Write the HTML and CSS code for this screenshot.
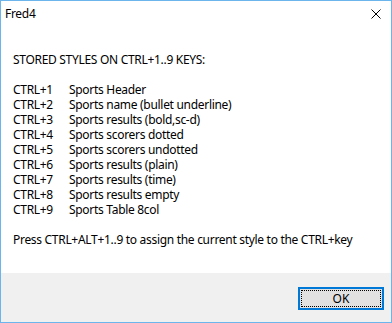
FILE: index.html
```html
<!DOCTYPE html>
<html lang="en">
<head>
    <meta charset="UTF-8">
    <title>Fred4</title>
    <link rel="stylesheet" href="styles.css">
</head>
<body>

    <div class="window">
        <div class="titlebar">
            <span class="title">Fred4</span>
            <span class="close">
                <svg width="10" height="10" viewBox="0 0 10 10">
                    <path d="M0.5 0.5 L9.5 9.5 M9.5 0.5 L0.5 9.5" stroke="#000" stroke-width="1" fill="none"/>
                </svg>
            </span>
        </div>

        <div class="content">
            <p class="line">STORED STYLES ON CTRL+1..9 KEYS:</p>
            <p class="line">&nbsp;</p>
            <div class="keys">
                <span>CTRL+1</span><span>Sports Header</span>
                <span>CTRL+2</span><span>Sports name (bullet underline)</span>
                <span>CTRL+3</span><span>Sports results (bold,sc-d)</span>
                <span>CTRL+4</span><span>Sports scorers dotted</span>
                <span>CTRL+5</span><span>Sports scorers undotted</span>
                <span>CTRL+6</span><span>Sports results (plain)</span>
                <span>CTRL+7</span><span>Sports results (time)</span>
                <span>CTRL+8</span><span>Sports results empty</span>
                <span>CTRL+9</span><span>Sports Table 8col</span>
            </div>
            <p class="line">&nbsp;</p>
            <p class="line">Press CTRL+ALT+1..9 to assign the current style to the CTRL+key</p>
        </div>

        <div class="footer">
            <button class="ok-button"><span class="focus">OK</span></button>
        </div>
    </div>

</body>
</html>
```

FILE: styles.css
```css
body {
    margin: 0;
    font-family: "Noto Sans", "Open Sans", sans-serif;
    font-size: 12px;
    color: #000;
    background-color: #fff;
}

.window {
    width: 392px;
    height: 323px;
    box-sizing: border-box;
    border: 1px solid #6cb4ec;
    display: flex;
    flex-direction: column;
    background-color: #fff;
}

.titlebar {
    height: 30px;
    display: flex;
    justify-content: space-between;
    align-items: flex-start;
    padding: 5px 0 0 4px;
    box-sizing: border-box;
}

.title {
    font-size: 12px;
    line-height: 16px;
    letter-spacing: -0.3px;
}

.close {
    width: 30px;
    height: 20px;
    display: flex;
    justify-content: center;
    padding-top: 3px;
    box-sizing: border-box;
}

.content {
    flex: 1;
    padding: 21px 12px 0 12px;
    line-height: 15px;
    letter-spacing: -0.3px;
}

.line {
    margin: 0;
    white-space: nowrap;
}

.keys {
    display: grid;
    grid-template-columns: 56px auto;
}

.footer {
    height: 49px;
    background-color: #f0f0f0;
    display: flex;
    justify-content: flex-end;
    align-items: flex-start;
    padding: 14px 7px 0 0;
    box-sizing: border-box;
}

.ok-button {
    width: 86px;
    height: 23px;
    padding: 1px;
    border: 2px solid #0078d7;
    background-color: #e1e1e1;
    font-family: inherit;
    font-size: 12px;
    box-sizing: border-box;
    display: flex;
}

.focus {
    flex: 1;
    border: 1px dotted #000;
    display: flex;
    align-items: center;
    justify-content: center;
    line-height: 13px;
}
```
